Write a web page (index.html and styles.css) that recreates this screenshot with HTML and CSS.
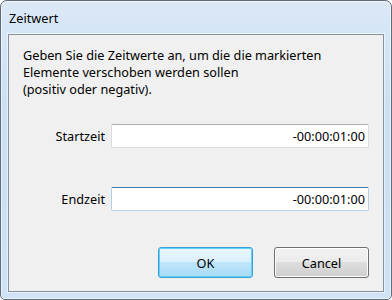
FILE: index.html
```html
<!DOCTYPE html>
<html lang="de">
<head>
    <meta charset="UTF-8">
    <title>Zeitwert</title>
    <link rel="stylesheet" href="styles.css">
</head>
<body>
    <div class="window">
        <!-- Title bar -->
        <div class="titlebar">Zeitwert</div>

        <!-- Client area -->
        <div class="client">
            <p class="intro">Geben Sie die Zeitwerte an, um die die markierten<br>Elemente verschoben werden sollen<br>(positiv oder negativ).</p>

            <div class="fields">
                <div class="field">
                    <label class="field-label" for="start">Startzeit</label>
                    <input id="start" class="field-input" type="text" value="-00:00:01:00">
                </div>
                <div class="field">
                    <label class="field-label" for="end">Endzeit</label>
                    <input id="end" class="field-input focused" type="text" value="-00:00:01:00">
                </div>
            </div>

            <div class="buttons">
                <button class="btn btn-default">OK</button>
                <button class="btn">Cancel</button>
            </div>
        </div>
    </div>
</body>
</html>
```

FILE: styles.css
```css
* {
    margin: 0;
    padding: 0;
    box-sizing: border-box;
}

body {
    font-family: 'Noto Sans', 'DejaVu Sans', sans-serif;
    font-size: 12.7px;
    color: #000;
    width: 392px;
    height: 300px;
    background: #fff;
}

/* Window frame */
.window {
    width: 392px;
    height: 300px;
    display: flex;
    flex-direction: column;
    border: 1px solid #5d6b7b;
    border-radius: 7px 7px 5px 5px;
    background: linear-gradient(to bottom, #dbe8f6 0%, #c9dff4 40%, #cfe2f6 100%);
    box-shadow: inset 0 0 0 1px rgba(255, 255, 255, 0.6);
}

.titlebar {
    height: 33px;
    padding: 9px 0 0 8px;
    line-height: 16px;
    color: #000;
}

.client {
    flex: 1;
    margin: 0 7px 7px 7px;
    padding: 12px 14px 0 14px;
    background: #f0f0f0;
    border: 1px solid #86919d;
    box-shadow: 0 0 0 1px rgba(255, 255, 255, 0.55);
    display: flex;
    flex-direction: column;
}

.intro {
    line-height: 17px;
    color: #000;
}

/* Form rows */
.fields {
    margin-top: 26px;
    display: flex;
    flex-direction: column;
    gap: 39px;
}

.field {
    display: flex;
    align-items: center;
    gap: 6px;
}

.field-label {
    width: 82px;
    text-align: right;
}

.field-input {
    width: 258px;
    height: 24px;
    padding: 0 3px;
    font-family: inherit;
    font-size: inherit;
    text-align: right;
    color: #000;
    background: #fff;
    border: 1px solid #dcdcdc;
    border-top-color: #abadb3;
    border-radius: 2px;
    outline: none;
}

.field-input.focused {
    border-color: #b5cfe7;
    border-top-color: #3d7bad;
}

/* Buttons */
.buttons {
    margin-top: 36px;
    display: flex;
    justify-content: flex-end;
    gap: 21px;
}

.btn {
    width: 95px;
    height: 31px;
    font-family: inherit;
    font-size: inherit;
    color: #000;
    border: 1px solid #707070;
    border-radius: 3px;
    background: linear-gradient(to bottom, #f2f2f2 0%, #ebebeb 49%, #dddddd 50%, #cfcfcf 100%);
    box-shadow: inset 0 0 0 1px #fcfcfc;
}

.btn-default {
    border-color: #3c9fd9;
    background: linear-gradient(to bottom, #eaf6fd 0%, #d9f0fc 49%, #bee6fd 50%, #a7d9f5 100%);
    box-shadow: inset 0 0 0 1px #5fd1f5;
}
```
